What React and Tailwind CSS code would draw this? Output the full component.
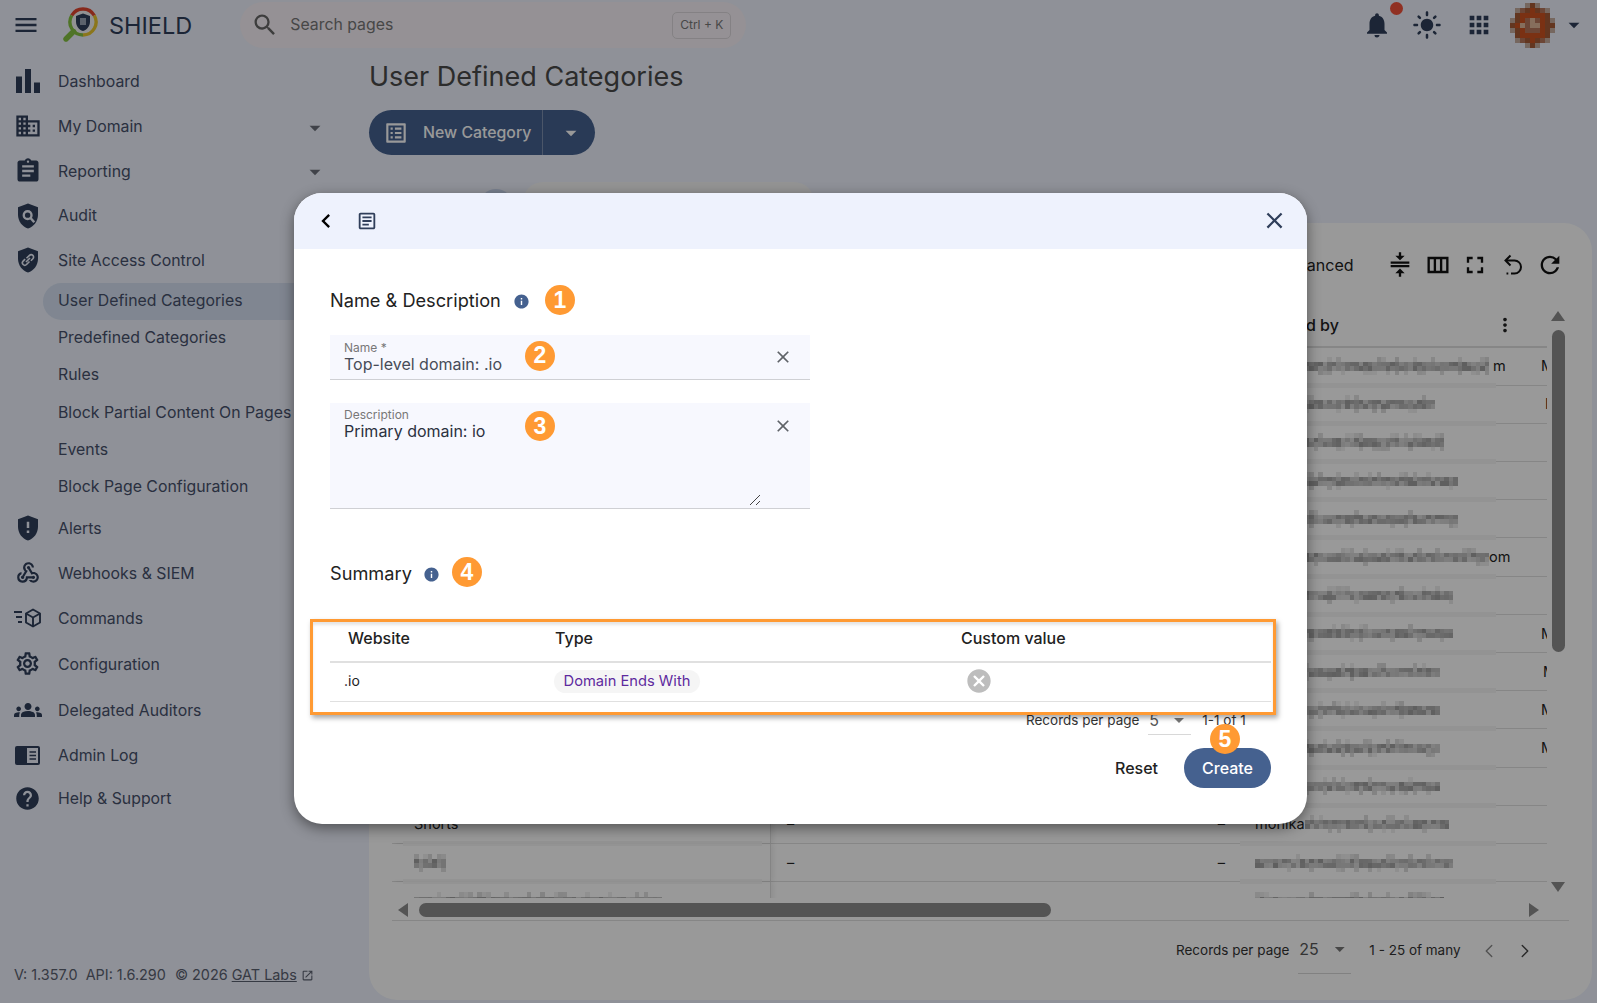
import React from "react";
import {
  MdMenu, MdSearch, MdNotifications, MdLightMode, MdApps, MdArrowDropDown, MdBarChart, MdDomain,
  MdAssignment, MdGppMaybe, MdOutlineWebhook, MdOutlineSettings, MdGroups, MdHelp, MdOpenInNew,
  MdChevronLeft, MdOutlineArticle, MdClose, MdInfo, MdCancel, MdOutlineListAlt,
  MdCompress, MdOutlineViewColumn, MdFullscreen, MdRefresh, MdMoreVert,
} from "react-icons/md";
import { ChevronLeft, ChevronRight } from "lucide-react";

const SHIELD = "M12 2 4 5v6.09c0 5.05 3.41 9.76 8 10.91 4.59-1.15 8-5.86 8-10.91V5l-8-3z";

function Logo() {
  return (
    <svg width="36" height="36" viewBox="0 0 36 36" fill="none">
      <circle cx="20" cy="15" r="13" fill="#f4f4f6" />
      <path d="M8.7 8.5A13 13 0 0 1 31.3 8.5" stroke="#e2452f" strokeWidth="3.4" />
      <path d="M31.3 8.5A13 13 0 0 1 20 28" stroke="#e8c52e" strokeWidth="3.4" />
      <path d="M20 28A13 13 0 0 1 8.7 8.5" stroke="#84c241" strokeWidth="3.4" />
      <path d="M10.5 24.5 3 32" stroke="#84c241" strokeWidth="5.4" strokeLinecap="round" />
      <path d="M20 6.5l-7 2.6v5.3c0 4.4 3 8.5 7 9.5 4-1 7-5.1 7-9.5V9.1l-7-2.6z" fill="#2f3e5a" />
      <rect x="17" y="11" width="6" height="7" fill="#9aa3b5" />
    </svg>
  );
}

function AuditIcon() {
  return (
    <svg width="30" height="30" viewBox="0 0 24 24">
      <path d={SHIELD} fill="#2f3e5a" />
      <circle cx="11.7" cy="11.3" r="3.1" fill="none" stroke="#eef2fd" strokeWidth="1.9" />
      <path d="M14 13.6 17 17" stroke="#eef2fd" strokeWidth="2" />
    </svg>
  );
}

function LinkShieldIcon() {
  return (
    <svg width="30" height="30" viewBox="0 0 24 24" fill="none">
      <path d={SHIELD} fill="#2f3e5a" />
      <path d="M10.8 10.6 13.2 8.3a1.9 1.9 0 0 1 2.7 2.7l-1.6 1.6M13.2 13.2l-2.4 2.4a1.9 1.9 0 0 1-2.7-2.7l1.6-1.6M10.4 13.6l3.2-3.2" stroke="#eef2fd" strokeWidth="1.3" />
    </svg>
  );
}

function CommandsIcon() {
  return (
    <svg width="27" height="20" viewBox="0 0 27 20" fill="none" stroke="#2f3e5a" strokeWidth="1.9">
      <path d="M0 4h8M2 9h6M4 14h4" />
      <path d="M19 1.5l7 4v9l-7 4-7-4v-9l7-4z" strokeLinejoin="round" />
      <path d="M12 5.5l7 4 7-4M19 9.5v9" />
    </svg>
  );
}

function AdminLogIcon() {
  return (
    <svg width="25" height="19" viewBox="0 0 25 19">
      <rect x="0" y="0" width="25" height="19" rx="2" fill="#2f3e5a" />
      <rect x="12" y="2" width="11" height="15" fill="#eef2fd" />
      <path d="M14.5 6h6.5M14.5 9.5h6.5M14.5 13h6.5" stroke="#2f3e5a" strokeWidth="1.5" />
    </svg>
  );
}

function UndoIcon() {
  return (
    <svg width="24" height="24" viewBox="0 0 24 24" fill="none" stroke="#111" strokeWidth="2">
      <path d="M9.5 2.5 4.5 7.5l5 5" />
      <path d="M5 7.5h8.5a6.5 6.5 0 0 1 0 13H10" />
      <path d="M5.5 20.5h1.8" />
    </svg>
  );
}

const AVATAR = ["...aba...", ".aebcbea.", ".bcccccb.", "abcedecba", "bcdeddcbb", "abceeecba", ".bcccccb.", ".aebcbea.", "...aba..."];
const AVATAR_COLORS = { a: "#c5ac9f", e: "#b5765a", b: "#a55a36", c: "#cc5320", d: "#e0b79a" };

function Avatar() {
  return (
    <svg width="45" height="45" viewBox="0 0 9 9" shapeRendering="crispEdges">
      {AVATAR.map((row, y) =>
        row.split("").map((c, x) =>
          c === "." ? null : <rect key={`${x}-${y}`} x={x} y={y} width="1" height="1" fill={AVATAR_COLORS[c]} />
        )
      )}
    </svg>
  );
}

/* The reference's e-mail addresses are redacted by a pixel mosaic: an image, not text. */
function Mosaic({ width, seed = 1 }) {
  const cell = 4.5;
  const cols = Math.floor(width / cell);
  let s = seed * 9301 + 49297;
  const next = () => {
    s = (s * 9301 + 49297) % 233280;
    return s / 233280;
  };
  const cells = [];
  for (let x = 0; x < cols; x++) {
    for (let y = 0; y < 4; y++) {
      const dense = y === 1 || y === 2;
      const v = next();
      if (!dense && v > 0.25) continue;
      const o = dense ? 0.14 + next() * 0.24 : 0.05 + next() * 0.1;
      cells.push(<rect key={`${x}-${y}`} x={x * cell} y={y * cell} width={cell} height={cell} fill="#000" opacity={o} />);
    }
  }
  return (
    <svg width={width} height={cell * 4} className="shrink-0" shapeRendering="crispEdges">
      {cells}
    </svg>
  );
}

const ICON = "#2f3e5a";
const topNav = [
  { label: "Dashboard", icon: <MdBarChart size={36} color={ICON} /> },
  { label: "My Domain", icon: <MdDomain size={28} color={ICON} />, caret: true },
  { label: "Reporting", icon: <MdAssignment size={28} color={ICON} />, caret: true },
  { label: "Audit", icon: <AuditIcon /> },
  { label: "Site Access Control", icon: <LinkShieldIcon /> },
];
const subNav = ["User Defined Categories", "Predefined Categories", "Rules", "Block Partial Content On Pages", "Events", "Block Page Configuration"];
const bottomNav = [
  { label: "Alerts", icon: <MdGppMaybe size={30} color={ICON} />, h: "h-[45px]" },
  { label: "Webhooks & SIEM", icon: <MdOutlineWebhook size={26} color={ICON} />, h: "h-[45px]" },
  { label: "Commands", icon: <CommandsIcon />, h: "h-[45px]" },
  { label: "Configuration", icon: <MdOutlineSettings size={27} color={ICON} />, h: "h-[46px]" },
  { label: "Delegated Auditors", icon: <MdGroups size={28} color={ICON} />, h: "h-[46px]" },
  { label: "Admin Log", icon: <AdminLogIcon />, h: "h-[44.5px]" },
  { label: "Help & Support", icon: <MdHelp size={27} color={ICON} />, h: "h-[42px]" },
];

function NavRow({ item, h }) {
  return (
    <div className={`flex items-center ${h}`}>
      <span className="flex w-[55px] shrink-0 items-center justify-center">{item.icon}</span>
      <span className="ml-[3px] pt-[1.5px] text-[15.85px] text-[#46506b]">{item.label}</span>
      {item.caret && <MdArrowDropDown size={26} color="#6b6f7a" className="ml-auto mr-[41px] mt-[3px]" />}
    </div>
  );
}

function Sidebar() {
  return (
    <aside className="flex w-[369px] shrink-0 flex-col pt-[9px]">
      {topNav.map((item) => <NavRow key={item.label} item={item} h="h-[44.75px]" />)}
      {subNav.map((label, i) => (
        <div
          key={label}
          className={`ml-[43px] flex h-[37.2px] items-center whitespace-nowrap pb-[1px] pl-[15px] text-[15.85px] text-[#46506b] ${i === 0 ? "rounded-l-full bg-[#d5e0f2]" : ""}`}
        >
          {label}
        </div>
      ))}
      {bottomNav.map((item) => <NavRow key={item.label} item={item} h={item.h} />)}
      <div className="mt-auto mb-[17px] flex items-center pl-[14px] text-[14.4px] text-[#5b6170]">
        <span>V: 1.357.0</span>
        <span className="ml-[8px]">API: 1.6.290</span>
        <span className="ml-[9px]">© 2026 <span className="underline">GAT Labs</span></span>
        <MdOpenInNew size={13} className="ml-[4px]" />
      </div>
    </aside>
  );
}

function Header() {
  return (
    <header className="flex h-[50px] shrink-0 items-center">
      <MdMenu size={28} color={ICON} className="ml-[12px]" />
      <span className="ml-[23px]"><Logo /></span>
      <span className="ml-[10px] mt-[1px] text-[23.5px] text-[#2f3e5a]">SHIELD</span>
      <div className="ml-[48px] flex h-[46px] w-[506px] items-center rounded-full bg-[#f8f2f8] pl-[11px]">
        <MdSearch size={28} color="#666" />
        <span className="ml-[11px] text-[15.85px] text-[#777]">Search pages</span>
        <span className="ml-auto mr-[15px] flex h-[27px] w-[59px] items-center justify-center rounded-[5px] border border-[#dcd8dc] text-[12px] text-[#777]">Ctrl + K</span>
      </div>
      <div className="ml-auto flex items-center pr-[10px]">
        <span className="relative">
          <MdNotifications size={30} color={ICON} />
          <span className="absolute left-[28px] top-[-8px] h-[13px] w-[13px] rounded-full bg-[#f0503a]" />
        </span>
        <MdLightMode size={30} color={ICON} className="ml-[20px]" />
        <MdApps size={28} color={ICON} className="ml-[23px]" />
        <span className="ml-[17px]"><Avatar /></span>
        <MdArrowDropDown size={26} color={ICON} className="ml-[6px]" />
      </div>
    </header>
  );
}

const rows = [
  { blur: 238, after: "m", last: "M", inset: "pl-[3px]" },
  { blur: 182, last: "I", inset: "pl-[7px]" },
  { blur: 193 },
  { blur: 206 },
  { blur: 205 },
  { blur: 234, after: "om" },
  { blur: 202 },
  { blur: 198, last: "M", inset: "pl-[3px]" },
  { blur: 188, last: "M", inset: "pl-[5px]" },
  { blur: 188, last: "M", inset: "pl-[3px]" },
  { blur: 188, last: "M", inset: "pl-[3px]" },
  { blur: 188 },
  { name: "Shorts", before: "monika", blur: 145, dash: true, band: true },
  { nameBlur: 32, blur: 201, dash: true, band: true },
  { nameBlur: 250, blur: 190, dash: true },
];

function Row({ r, i }) {
  return (
    <div className="relative flex h-[38.2px] shrink-0 items-center border-b border-[#e0e0e0] text-[14.5px] text-[#222]">
      <div className="flex h-full w-[379px] shrink-0 items-center border-r border-[#dcdcdc] pl-[22px] shadow-[3px_0_4px_rgba(0,0,0,0.06)]">
        {r.name}
        {r.nameBlur && <Mosaic width={r.nameBlur} seed={i + 40} />}
      </div>
      <div className="w-[240px] shrink-0 pl-[16px]">{r.dash ? "–" : ""}</div>
      <div className="w-[229px] shrink-0 pr-[15px] text-right">{r.dash ? "–" : ""}</div>
      <div className="flex w-[298px] shrink-0 items-center pl-[15px]">
        {r.before}
        <Mosaic width={r.blur} seed={i + 1} />
        {r.after}
      </div>
      <div className={`min-w-0 flex-1 overflow-hidden ${r.inset || ""}`}>{r.last}</div>
      <span className="absolute -bottom-[3px] left-[848px] h-[5px] w-[256px] bg-[#f6f6f6]" />
      {r.band && <span className="absolute -bottom-[3px] left-[11px] h-[5px] w-[359px] bg-[#f6f6f6]" />}
    </div>
  );
}

function MainContent() {
  return (
    <main className="flex min-w-0 flex-1 flex-col">
      <h1 className="mt-[7px] h-[40px] text-[27px] leading-[40px] text-[#4a4a4a]">User Defined Categories</h1>
      <div className="mt-[13px] flex h-[45px] w-[226px] items-center rounded-full bg-[#456190] text-white">
        <MdOutlineListAlt size={26} className="ml-[14px]" />
        <span className="ml-[14px] text-[15.85px] font-medium">New Category</span>
        <span className="ml-auto flex h-full w-[53px] items-center justify-center border-l border-[#7d90b0] pl-[3px]">
          <MdArrowDropDown size={26} />
        </span>
      </div>
      <div className="mt-[27px] flex h-[41px] items-start">
        <span className="ml-[110px] mt-[7px] h-[34px] w-[34px] rounded-full bg-[#c9d5ee]" />
        <span className="ml-[10px] h-[41px] w-[291px] rounded-t-[20px] bg-[#f7f7f7]" />
      </div>
      <section className="mr-[5px] flex h-[777px] flex-col rounded-[28px] bg-white px-[23px]">
        <div className="flex h-[84px] shrink-0 items-center justify-end">
          <span className="mr-[28px] text-base text-[#222]">Advanced</span>
          <div className="flex w-[37.5px] justify-center"><MdCompress size={28} color="#111" /></div>
          <div className="flex w-[37.5px] justify-center"><MdOutlineViewColumn size={28} color="#111" /></div>
          <div className="flex w-[37.5px] justify-center"><MdFullscreen size={28} color="#111" /></div>
          <div className="flex w-[37.5px] justify-center"><UndoIcon /></div>
          <div className="flex w-[37.5px] justify-center"><MdRefresh size={28} color="#111" /></div>
        </div>
        <div className="flex h-[591px] shrink-0">
          <div className="flex min-w-0 flex-1 flex-col overflow-hidden">
            <div className="flex h-[40.5px] shrink-0 items-center border-b-2 border-[#e0e0e0] pb-[2px] text-base font-medium text-[#222]">
              <div className="w-[863px] shrink-0" />
              <span>Created by</span>
              <MdMoreVert size={22} className="ml-[155px]" />
            </div>
            {rows.map((r, i) => <Row key={i} r={r} i={i} />)}
          </div>
          <div className="relative w-[22px] shrink-0">
            <span className="absolute left-[4px] top-[4px] h-0 w-0 border-x-[7px] border-b-[10px] border-x-transparent border-b-[#8c8c8c]" />
            <span className="absolute left-[5px] top-[23px] h-[322px] w-[13px] rounded-full bg-[#8c8c8c]" />
            <span className="absolute bottom-[6px] left-[4px] h-0 w-0 border-x-[7px] border-t-[10px] border-x-transparent border-t-[#8c8c8c]" />
          </div>
        </div>
        <div className="flex h-[23px] shrink-0 items-center border-b border-[#e0e0e0] pt-[1px]">
          <span className="ml-[6px] h-0 w-0 border-y-[7px] border-r-[10px] border-y-transparent border-r-[#8c8c8c]" />
          <span className="ml-[11px] h-[14px] w-[632px] rounded-full bg-[#8c8c8c]" />
          <span className="ml-auto mr-[30px] h-0 w-0 border-y-[7px] border-l-[10px] border-y-transparent border-l-[#8c8c8c]" />
        </div>
        <div className="flex h-[55px] items-center pt-[4px] text-[13.5px] text-[#333]">
          <span className="ml-[784px]">Records per page</span>
          <div className="ml-[9px] flex h-[47px] w-[53px] items-center border-b border-[#d8d8d8] pb-[22px] pt-[20px]">
            <span className="ml-[1px] text-base text-[#555]">25</span>
            <MdArrowDropDown size={24} color="#777" className="ml-[9px]" />
          </div>
          <span className="ml-[18px]">1 - 25 of many</span>
          <ChevronLeft size={22} strokeWidth={1.5} color="#888" className="ml-[17px]" />
          <ChevronRight size={22} strokeWidth={1.5} color="#444" className="ml-[14px]" />
        </div>
      </section>
    </main>
  );
}

function Badge({ n, pos }) {
  return (
    <span className={`absolute flex h-[30px] w-[30px] items-center justify-center rounded-full bg-[#ff9a33] font-['Liberation_Sans',sans-serif] text-[23px] font-bold text-white ${pos}`}>
      {n}
    </span>
  );
}

function Field({ label, value, valueColor, h, labelTop, closeTop, resize }) {
  return (
    <div className={`relative flex w-[480px] flex-col border-b border-[#cfd0d4] bg-[#f7f8fe] pl-[14px] ${h}`}>
      <span className={`text-xs leading-[15px] text-[#777] ${labelTop}`}>{label}</span>
      <span className={`text-base leading-[18px] ${valueColor}`}>{value}</span>
      <MdClose size={20} color="#5f6368" className={`absolute right-[17px] ${closeTop}`} />
      {resize && (
        <svg width="12" height="12" viewBox="0 0 12 12" className="absolute bottom-[2px] left-[419px]" stroke="#444" strokeWidth="1" fill="none">
          <path d="M1 11 11 1M7 11l4-4" />
        </svg>
      )}
    </div>
  );
}

function Modal() {
  return (
    <div className="absolute left-[294px] top-[193px] flex h-[631px] w-[1013px] flex-col overflow-hidden rounded-[28px] bg-white font-['Inter',sans-serif] shadow-[0_4px_14px_rgba(0,0,0,0.45)]">
      <div className="flex h-[56px] shrink-0 items-center bg-[#eef2fd]">
        <MdChevronLeft size={28} color="#000" className="ml-[18px]" />
        <MdOutlineArticle size={22} color="#2f3e5a" className="ml-[16px]" />
        <MdClose size={27} color="#2f3e5a" className="-mt-[1px] ml-auto mr-[19px]" />
      </div>
      <div className="flex flex-1 flex-col px-[36px] pt-[37px]">
        <div className="flex h-[30px] shrink-0 items-center text-[18.2px] text-[#222]">
          Name &amp; Description
          <MdInfo size={17} color="#45618f" className="ml-[12px]" />
        </div>
        <div className="mt-[19px]"><Field label="Name *" value="Top-level domain: .io" valueColor="text-[#474c58]" h="h-[45px]" labelTop="mt-[5px]" closeTop="top-[12px]" /></div>
        <div className="mt-[23px]"><Field label="Description" value="Primary domain: io" valueColor="text-[#2b3140]" h="h-[106px]" labelTop="mt-[4px]" closeTop="top-[13px]" resize /></div>
        <div className="mt-[50px] flex h-[30px] shrink-0 items-center text-[18.2px] text-[#222]">
          Summary
          <MdInfo size={17} color="#45618f" className="ml-[11px]" />
        </div>
        <div className="relative mt-[32px]">
          <div className="flex h-[42px] items-center border-b-2 border-[#e0e0e0] pb-[6px] text-base font-medium text-[#222]">
            <span className="ml-[18px] w-[207px]">Website</span>
            <span className="w-[406px]">Type</span>
            <span>Custom value</span>
          </div>
          <div className="flex h-[39px] items-center border-b border-[#e0e0e0] pb-[2px] text-sm text-[#222]">
            <span className="ml-[14px] w-[210px]">.io</span>
            <span className="flex h-[23px] w-[146px] items-center justify-center rounded-full bg-[#f5f5f5] text-[14.7px] text-[#5e2a9e]">Domain Ends With</span>
            <MdCancel size={28} color="#bdbdbd" className="ml-[265px]" />
          </div>
          <div className="pointer-events-none absolute -bottom-[13px] -left-[20px] -right-[5px] -top-[2px] border-[3px] border-[#ff9a33] shadow-[2px_3px_5px_rgba(0,0,0,0.35),inset_0_3px_3px_rgba(0,0,0,0.1)]" />
        </div>
        <div className="flex h-[36px] shrink-0 items-center pl-[696px] text-[13.5px] text-[#333]">
          <span>Records per page</span>
          <div className="ml-[9px] flex h-[30px] w-[43px] items-center border-b border-[#d8d8d8]">
            <span className="ml-[1px] text-base text-[#555]">5</span>
            <MdArrowDropDown size={24} color="#777" className="ml-[8px]" />
          </div>
          <span className="ml-[11px]">1-1 of 1</span>
        </div>
        <div className="mt-[9.5px] flex shrink-0 items-center justify-end">
          <span className="mr-[26px] text-base font-medium text-[#222]">Reset</span>
          <span className="flex h-[40px] w-[87px] items-center justify-center rounded-full bg-[#45618f] text-base font-medium text-white">Create</span>
        </div>
      </div>
      <Badge n="1" pos="left-[251px] top-[92px]" />
      <Badge n="2" pos="left-[231px] top-[147.5px]" />
      <Badge n="3" pos="left-[231px] top-[218px]" />
      <Badge n="4" pos="left-[158px] top-[364px]" />
      <Badge n="5" pos="left-[916px] top-[531px]" />
    </div>
  );
}

export default function App() {
  return (
    <div className="relative h-screen w-screen overflow-hidden bg-[#eef2fd] font-['Inter',sans-serif]">
      <div className="flex h-full flex-col">
        <Header />
        <div className="flex min-h-0 flex-1">
          <Sidebar />
          <MainContent />
        </div>
      </div>
      <div className="absolute inset-0 bg-black/40" />
      <Modal />
    </div>
  );
}
